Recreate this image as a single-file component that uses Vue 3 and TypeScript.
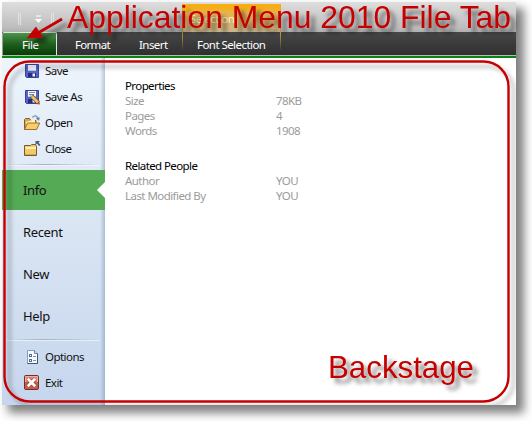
<script setup lang="ts">
type IconName = 'save' | 'saveAs' | 'open' | 'close' | 'options' | 'exit'
interface Command { label: string; icon: IconName }
interface Group { title: string; rows: [string, string][] }

const fileCommands: Command[] = [
  { label: 'Save', icon: 'save' },
  { label: 'Save As', icon: 'saveAs' },
  { label: 'Open', icon: 'open' },
  { label: 'Close', icon: 'close' },
]
const appCommands: Command[] = [
  { label: 'Options', icon: 'options' },
  { label: 'Exit', icon: 'exit' },
]
const sections: { commands: Command[]; end: boolean }[] = [
  { commands: fileCommands, end: false },
  { commands: appCommands, end: true },
]
const pages: string[] = ['Info', 'Recent', 'New', 'Help']
const active = 'Info'
const groups: Group[] = [
  { title: 'Properties', rows: [['Size', '78KB'], ['Pages', '4'], ['Words', '1908']] },
  { title: 'Related People', rows: [['Author', 'YOU'], ['Last Modified By', 'YOU']] },
]
</script>

<template>
  <div class="page">
    <div class="window">
      <header class="titlebar">
        <i class="grip"></i>
        <svg class="more" width="7" height="9" viewBox="0 0 7 9"><path d="M1 1h5" stroke="#fff" /><path d="M0 4h7L3.500 8z" fill="#fff" /></svg>
        <i class="grip"></i>
      </header>
      <nav class="tabs">
        <span class="tab file">File</span>
        <span class="tab format">Format</span>
        <span class="tab insert">Insert</span>
        <span class="tab font">Font Selection</span>
        <div class="context"><span>Selection</span></div>
      </nav>
      <div class="rule"></div>
      <main class="backstage">
        <aside class="sidebar">
          <template v-for="section in sections" :key="String(section.end)">
            <ul class="pages" v-if="section.end">
              <li v-for="page in pages" :key="page" :class="{ active: page === active }">
                {{ page }}
                <svg v-if="page === active" class="notch" width="8" height="16" viewBox="0 0 8 16"><path d="M8 0v16L0 8z" fill="#fff" /></svg>
              </li>
            </ul>
            <div v-if="section.end" class="sep"></div>
            <ul class="commands" :class="{ end: section.end }">
              <li v-for="cmd in section.commands" :key="cmd.label">
                <svg class="icon" width="18" height="18" viewBox="0 0 18 18">
                  <g v-if="cmd.icon === 'save' || cmd.icon === 'saveAs'">
                    <path d="M2.500 2.500h13v13h-12l-1-1z" fill="#5666c8" stroke="#3843a0" />
                    <path d="M5 3h8v6H5z" fill="#f5f8ff" />
                    <path d="M5 8h8v1H5z" fill="#b8c8ee" />
                    <path d="M5 11h8v4H5z" fill="#252f78" />
                    <path d="M9.500 11.500h2.500v3H9.500z" fill="#eef2fc" />
                    <g v-if="cmd.icon === 'saveAs'">
                      <path d="M6 4.500h6M6 6.500h5" stroke="#7788ad" />
                      <path d="M8.500 8l7 7" stroke="#725026" stroke-width="4" />
                      <path d="M9 8.500l6 6" stroke="#efc36e" stroke-width="2.600" />
                      <path d="M7 6.500l3 .8-2 2z" fill="#f9edd0" stroke="#665544" stroke-width=".4" />
                      <path d="M14 15.500l2-2 1 2.200-1 1z" fill="#bd4a38" />
                    </g>
                  </g>
                  <g v-else-if="cmd.icon === 'open'">
                    <path d="M1.500 15.500v-10l1-1h4l1.500 2h5v9z" fill="#dda83f" stroke="#7a622f" />
                    <path d="M3 8l6-2h3v4H3z" fill="#fff1b9" />
                    <path d="M1.500 15.500l3-6.500h12.200l-3 6.500z" fill="#f7ce6b" stroke="#967332" />
                    <path d="M9.500 3.500c2-2.500 4.500-2 5.500 1" fill="none" stroke="#7891a8" stroke-width="1.300" />
                    <path d="M12.800 4.500l4-1.200-.8 3.500z" fill="#617d99" />
                  </g>
                  <g v-else-if="cmd.icon === 'close'">
                    <path d="M1.500 15.500v-10h6l1-1h4l1 2v9z" fill="#f2ca6c" stroke="#765c2c" />
                    <path d="M2.500 7h10.500v2h-10.500z" fill="#fff0b7" />
                    <path d="M2 14.500h11" stroke="#d9a54a" />
                    <path d="M12.500 1h4.500l-1.500 1.500 2 2.500-1.500 1-2-2.500-1.500 1.500z" fill="#465c7d" />
                  </g>
                  <g v-else-if="cmd.icon === 'options'">
                    <path d="M4.500 2.500h7l3 3v10h-10z" fill="#f7fbff" stroke="#879db9" />
                    <path d="M14.500 5.500v10h-10" fill="none" stroke="#405675" />
                    <path d="M11.500 2.500v3h3" fill="#cad8ea" stroke="#6f89a9" />
                    <path d="M6 6h3v3H6zM6 11h3v3H6z" fill="#506e94" />
                    <path d="M7 7h1v1H7zM7 12h1v1H7z" fill="#fff" />
                    <path d="M10 8.500h3M10 12.500h3" stroke="#7c94b2" />
                  </g>
                  <g v-else>
                    <rect x="1.500" y="1.500" width="14" height="14" rx="1.200" fill="#cf5748" stroke="#702f2b" />
                    <path d="M2.500 8V2.500h12V8" fill="#df8172" stroke="#efafa4" />
                    <path d="M5 5l7 7M12 5l-7 7" stroke="#9e3b32" stroke-width="4" />
                    <path d="M4.800 4.800l7.400 7.400M12.200 4.800l-7.400 7.400" stroke="#fff" stroke-width="2.800" />
                  </g>
                </svg>
                <span>{{ cmd.label }}</span>
              </li>
            </ul>
            <div v-if="!section.end" class="sep"></div>
          </template>
        </aside>
        <section class="content">
          <div v-for="group in groups" :key="group.title" class="group">
            <h2>{{ group.title }}</h2>
            <dl v-for="row in group.rows" :key="row[0]">
              <dt>{{ row[0] }}</dt>
              <dd>{{ row[1] }}</dd>
            </dl>
          </div>
        </section>
      </main>
    </div>
    <svg class="callouts" width="532" height="421" viewBox="0 0 532 421">
      <defs>
        <filter id="drop" x="-10%" y="-30%" width="120%" height="180%">
          <feDropShadow dx="5" dy="5" stdDeviation="2.300" flood-color="#000" flood-opacity=".5" />
        </filter>
        <filter id="soft" filterUnits="userSpaceOnUse" x="0" y="0" width="516" height="405">
          <feDropShadow dx="5" dy="5" stdDeviation="2" flood-color="#000" flood-opacity=".3" />
        </filter>
      </defs>
      <rect x="4.500" y="61.500" width="504" height="340" rx="25" fill="none" stroke="#c60000" stroke-width="2.400" filter="url(#soft)" />
      <g filter="url(#drop)" fill="#c40000">
        <path d="M62 19L38 33" stroke="#c40000" stroke-width="2.800" />
        <path d="M26.500 38.500L36 26.500L43 37.500z" />
        <text x="67" y="27.500" textLength="444" lengthAdjust="spacingAndGlyphs">Application Menu 2010 File Tab</text>
        <text x="328" y="378" textLength="146" lengthAdjust="spacingAndGlyphs">Backstage</text>
      </g>
    </svg>
  </div>
</template>

<style>
body { background: #fff; overflow: hidden; }
</style>

<style scoped>
.page { position: relative; width: 532px; height: 421px; padding: 2px; box-sizing: border-box; font: 11.5px/15px "Noto Sans", "Open Sans", sans-serif; color: #111; }
.window { width: 514px; height: 403px; background: #fff; box-shadow: 7px 7px 9px 1px rgba(0, 0, 0, .5); }
.titlebar { height: 30px; display: flex; align-items: flex-start; padding: 11px 0 0 16px; box-sizing: border-box; background: linear-gradient(#dedede, #bdbdbd 85%, #b0b0b0); }
.grip { width: 1px; height: 12px; border: solid #e2e2e2; border-width: 0 1px; }
.more { margin: 2px 9px 0 14px; }
.tabs { position: relative; height: 23px; display: flex; background: linear-gradient(#474747, #303030); color: #fff; line-height: 25px; }
.tab { white-space: nowrap; }
.file { box-sizing: border-box; width: 55px; height: 23px; margin-right: 18px; padding-left: 19px; line-height: 23px; letter-spacing: -.5px; border: 1px solid #dce8dc; border-bottom: 0; border-left-color: #8aa98b; border-radius: 2px 2px 0 0; background: linear-gradient(#4b944b, #1f601f 50%, #063c06); }
.format { width: 64px; letter-spacing: -.7px; }
.insert { width: 58px; letter-spacing: -.55px; }
.font { letter-spacing: -.55px; }
.context { position: absolute; left: 180px; top: -28px; width: 99px; height: 46px; box-sizing: border-box; border: solid; border-width: 0 1px; border-image: linear-gradient(#f5ad13, #d69b31 60%, transparent) 1; color: #fff4c8; }
.context span { display: block; height: 28px; padding-left: 7px; line-height: 29px; background: linear-gradient(#f5ae14 0 4px, #e7b34b 30%, #c9b78f); letter-spacing: -.5px; }
.rule { height: 3px; box-sizing: border-box; border-top: 1px solid #b5bbb5; background: #078511; }
.backstage { height: 347px; display: flex; }
.sidebar { width: 103px; box-sizing: border-box; background: linear-gradient(to right, transparent 98px, rgba(100, 130, 165, .4)), linear-gradient(#edf4fc, #dbe6f4 45%, #c6d6ed); }
ul { list-style: none; margin: 0; padding: 0; }
.commands li { display: flex; align-items: center; height: 26px; padding-left: 21px; gap: 4px; letter-spacing: -.55px; }
.commands li span { padding-bottom: 2px; }
.commands:not(.end) { height: 106px; }
.end { padding-top: 4px; }
.icon { flex: none; }
.sep { height: 1px; margin: 0 5px; background: linear-gradient(to right, transparent, #a9b1bd 40%, transparent); box-shadow: 0 1px rgba(255, 255, 255, .5); }
.pages { padding-top: 5px; height: 174px; box-sizing: border-box; }
.pages li { position: relative; height: 42px; padding-left: 21px; font-size: 13px; line-height: 43px; letter-spacing: -.35px; }
.pages .active { height: 40px; line-height: 40px; margin-bottom: 1px; background: #54aa55; }
.notch { position: absolute; right: 0; top: 12px; }
.content { padding: 20px 0 0 20px; }
.group { margin-bottom: 20px; }
h2 { margin: 0; font: inherit; letter-spacing: -.6px; color: #000; }
dl { display: flex; margin: 0; color: #9b9b9b; letter-spacing: -.55px; }
dt { width: 151px; }
dd { margin: 0; }
.callouts { position: absolute; left: 0; top: 0; pointer-events: none; font: 32px "Liberation Sans", Arial, sans-serif; }
</style>
